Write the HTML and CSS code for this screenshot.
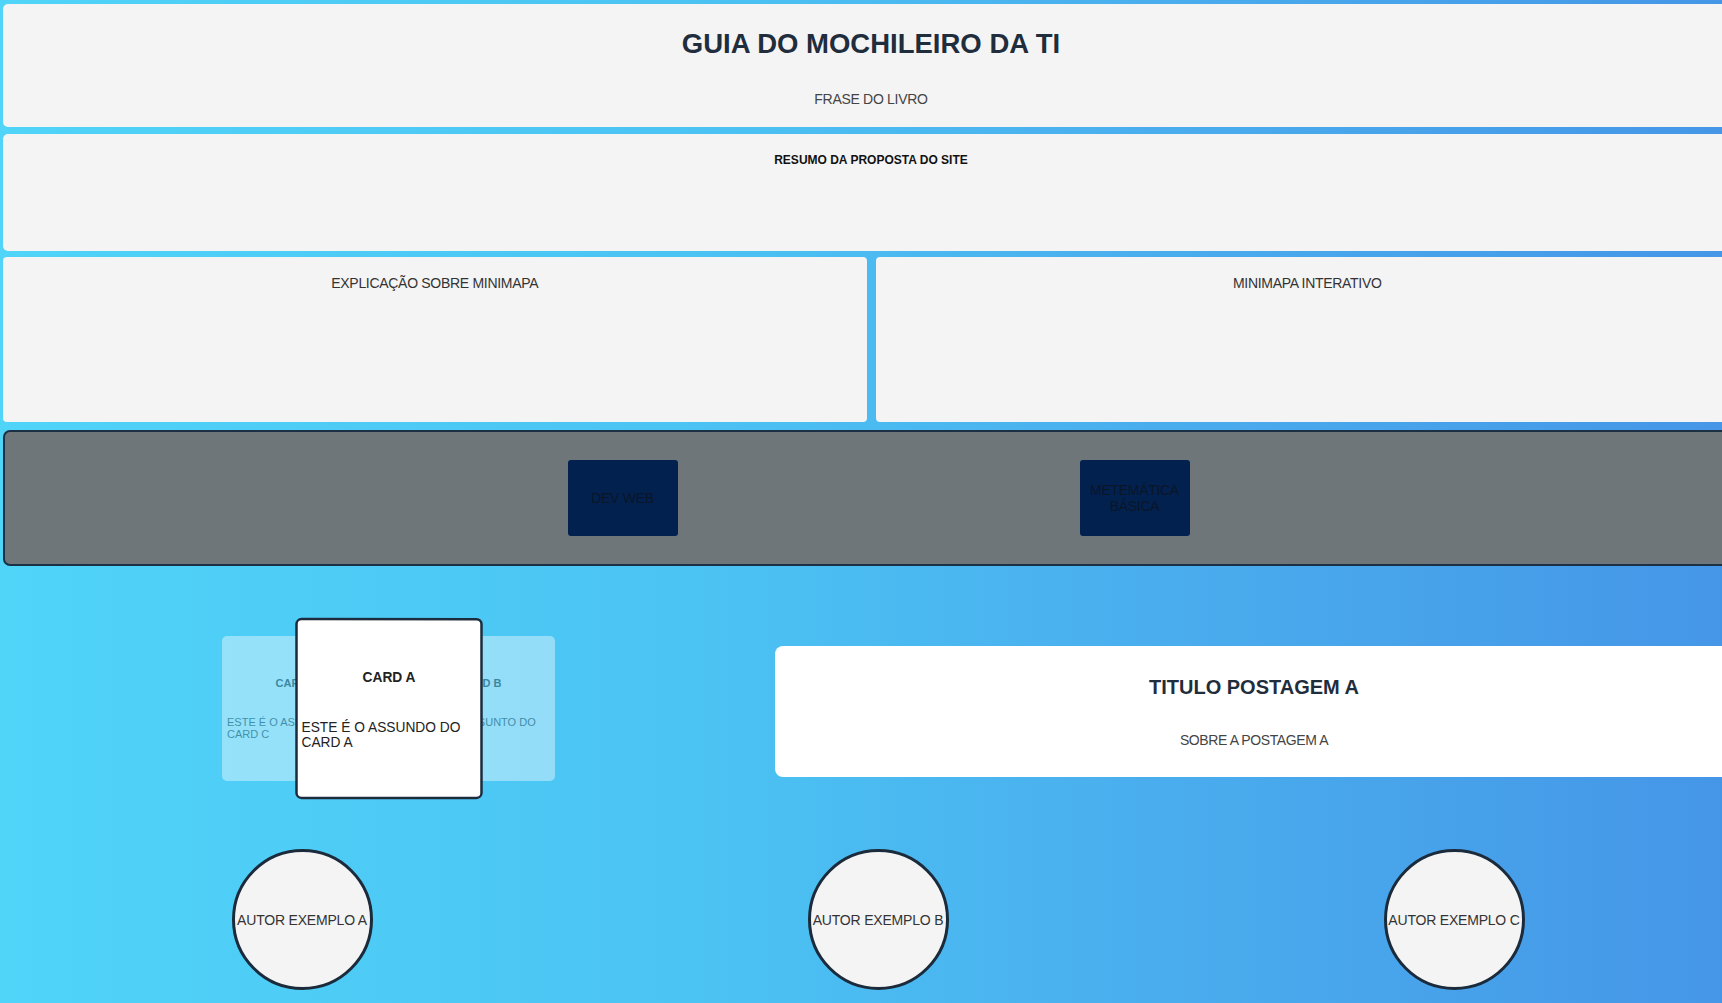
FILE: index.html
```html
<!DOCTYPE html>
<html lang="pt-BR">
<head>
<meta charset="utf-8">
<title>Guia do Mochileiro da TI</title>
<link rel="stylesheet" href="styles.css">
</head>
<body>
<div class="page">
  <header class="hero">
    <h1>GUIA DO MOCHILEIRO DA TI</h1>
    <p>FRASE DO LIVRO</p>
  </header>

  <section class="summary">
    <h2>RESUMO DA PROPOSTA DO SITE</h2>
  </section>

  <section class="minimap">
    <div class="panel"><h3>EXPLICAÇÃO SOBRE MINIMAPA</h3></div>
    <div class="panel"><h3>MINIMAPA INTERATIVO</h3></div>
  </section>

  <nav class="topics">
    <a class="topic" href="#">DEV WEB</a>
    <a class="topic" href="#">METEMÁTICA<br>BÁSICA</a>
  </nav>

  <section class="feature">
    <div class="carousel">
      <div class="card card-c">
        <h4>CARD C</h4>
        <p>ESTE É O ASSUNTO DO CARD C</p>
      </div>
      <div class="card card-b">
        <h4>CARD B</h4>
        <p>ESTE É O ASSUNTO DO CARD B</p>
      </div>
      <div class="card card-a">
        <h4>CARD A</h4>
        <p>ESTE É O ASSUNDO DO CARD A</p>
      </div>
    </div>
    <article class="post">
      <h2>TITULO POSTAGEM A</h2>
      <p>SOBRE A POSTAGEM A</p>
    </article>
  </section>

  <section class="authors">
    <div class="author">AUTOR EXEMPLO A</div>
    <div class="author">AUTOR EXEMPLO B</div>
    <div class="author">AUTOR EXEMPLO C</div>
  </section>
</div>
</body>
</html>
```

FILE: styles.css
```css
html, body {
  margin: 0;
  height: 100%;
  overflow: hidden;
}

body {
  font-family: "Liberation Sans", Arial, sans-serif;
  color: #333;
  background: linear-gradient(90deg, #50d4f8 0%, #4bc3f3 40%, #4aafee 65%, #4596e7 100%);
}

.page {
  width: 1736px;
  padding: 4px 0 0 3px;
  display: flex;
  flex-direction: column;
}

/* header */
.hero {
  height: 123px;
  box-sizing: border-box;
  padding-top: 24px;
  background: #f4f4f4;
  border-radius: 5px;
  text-align: center;
}

.hero h1 {
  margin: 0;
  font-size: 27.5px;
  line-height: 31px;
  font-weight: 700;
  color: #1f2d3d;
}

.hero p {
  margin: 32px 0 0;
  font-size: 14px;
  line-height: 16px;
  color: #444;
  letter-spacing: -0.3px;
}

/* summary */
.summary {
  margin-top: 7px;
  height: 117px;
  box-sizing: border-box;
  padding-top: 19px;
  background: #f4f4f4;
  border-radius: 5px;
  text-align: center;
}

.summary h2 {
  margin: 0;
  font-size: 12px;
  line-height: 14px;
  font-weight: 700;
  color: #111;
}

/* minimap */
.minimap {
  margin-top: 6px;
  height: 165px;
  display: grid;
  grid-template-columns: 1fr 1fr;
  gap: 9px;
}

.panel {
  box-sizing: border-box;
  padding-top: 18px;
  background: #f4f4f4;
  border-radius: 4px;
  text-align: center;
}

.panel h3 {
  margin: 0;
  font-size: 14px;
  line-height: 16px;
  font-weight: 400;
  color: #333;
  letter-spacing: -0.3px;
}

/* topics bar */
.topics {
  margin-top: 8px;
  height: 136px;
  box-sizing: border-box;
  border: 2px solid #1b3045;
  border-radius: 7px;
  background: #6e7679;
  display: flex;
  align-items: center;
  justify-content: center;
  gap: 402px;
  padding-left: 15px;
}

.topic {
  width: 110px;
  height: 76px;
  background: #02214f;
  border-radius: 3px;
  display: flex;
  align-items: center;
  justify-content: center;
  text-align: center;
  font-size: 14px;
  line-height: 16px;
  color: #0a1628;
  text-decoration: none;
  letter-spacing: -0.3px;
}

/* feature row */
.feature {
  height: 283px;
  display: flex;
  align-items: flex-start;
}

.carousel {
  position: relative;
  width: 764px;
  height: 283px;
  flex: none;
}

.card {
  position: absolute;
  top: 70px;
  width: 150px;
  height: 145px;
  box-sizing: border-box;
  padding: 0 3px;
  background: #fff;
  border: 2px solid transparent;
  border-radius: 5px;
  display: flex;
  flex-direction: column;
  justify-content: center;
  opacity: 0.4;
}

.card h4 {
  margin: 0 0 26px;
  text-align: center;
  font-size: 11px;
  line-height: 13px;
  font-weight: 700;
  color: #222;
}

.card p {
  margin: 0;
  font-size: 11px;
  line-height: 12px;
  color: #333;
}

.card-c { left: 219px; }
.card-b { left: 402px; }

.card-a {
  left: 311px;
  opacity: 1;
  z-index: 2;
  border-color: #1c2c3c;
  transform: scale(1.25);
}

.card-a h4 { margin-bottom: 27px; }
.card-a p { color: #222; }

.post {
  margin-top: 80px;
  margin-left: 8px;
  width: 958px;
  height: 131px;
  flex: none;
  box-sizing: border-box;
  padding-top: 30px;
  background: #fff;
  border-radius: 8px;
  text-align: center;
}

.post h2 {
  margin: 0;
  font-size: 20px;
  line-height: 23px;
  font-weight: 700;
  color: #1f2d3d;
}

.post p {
  margin: 33px 0 0;
  font-size: 14px;
  line-height: 16px;
  color: #444;
  letter-spacing: -0.4px;
}

/* authors */
.authors {
  display: grid;
  grid-template-columns: repeat(3, 576px);
  padding-left: 11px;
}

.author {
  justify-self: center;
  width: 141px;
  height: 141px;
  box-sizing: border-box;
  border: 3px solid #1b2b3b;
  border-radius: 50%;
  background: #f4f4f4;
  display: flex;
  align-items: center;
  justify-content: center;
  font-size: 14px;
  color: #333;
  white-space: nowrap;
  letter-spacing: -0.2px;
}
```
